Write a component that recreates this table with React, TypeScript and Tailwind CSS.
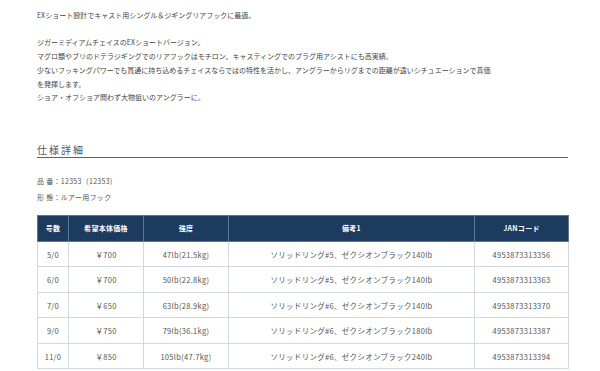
import React from "react";

const rows = [
  ["5/0", "￥700", "47lb(21.5kg)", "ソリッドリング#5、ゼクシオンブラック140lb", "4953873313356"],
  ["6/0", "￥700", "50lb(22.8kg)", "ソリッドリング#5、ゼクシオンブラック140lb", "4953873313363"],
  ["7/0", "￥650", "63lb(28.9kg)", "ソリッドリング#6、ゼクシオンブラック140lb", "4953873313370"],
  ["9/0", "￥750", "79lb(36.1kg)", "ソリッドリング#6、ゼクシオンブラック180lb", "4953873313387"],
  ["11/0", "￥850", "105lb(47.7kg)", "ソリッドリング#6、ゼクシオンブラック240lb", "4953873313394"],
];

export default function App() {
  return (
    <div
      className="w-[600px] h-[371px] overflow-hidden bg-white text-[#444] pl-[37px] pr-[32px]"
      style={{ fontFamily: '"Noto Sans CJK JP", "Noto Sans", sans-serif' }}
    >
      <div className="pt-[9px] text-[7px] leading-[13.7px] tracking-[0px]">
        <p>EXショート設計でキャスト用シングル＆ジギングリアフックに最適。</p>
        <p className="mt-[13.7px]">ジガーミディアムチェイスのEXショートバージョン。</p>
        <p>マグロ類やブリのドテラジギングでのリアフックはモチロン、キャスティングでのプラグ用アシストにも高実績。</p>
        <p>
          少ないフッキングパワーでも貫通に持ち込めるチェイスならではの特性を活かし、アングラーからリグまでの距離が遠いシチュエーションで真価
          <br />
          を発揮します。
        </p>
        <p>ショア・オフショア問わず大物狙いのアングラーに。</p>
      </div>

      <div className="mt-[38px] border-b border-[#4d6680]">
        <h2 className="text-[10px] leading-[14px] tracking-[2px] text-[#555]">仕様詳細</h2>
      </div>

      <div className="mt-[15px] text-[7px] leading-[16px] tracking-[0.3px] text-[#555]">
        <p>品 番：12353（12353)</p>
        <p>形 態：ルアー用フック</p>
      </div>

      <table className="mt-[10px] w-[531px] border-collapse table-fixed text-[7px]">
        <colgroup>
          <col className="w-[31px]" />
          <col className="w-[75px]" />
          <col className="w-[85px]" />
          <col className="w-[246px]" />
          <col className="w-[94px]" />
        </colgroup>
        <thead>
          <tr className="bg-[#1d3b5e] text-white font-bold h-[26px]">
            {["号数", "希望本体価格", "強度", "備考1", "JANコード"].map((h, i) => (
              <th
                key={i}
                className="border border-[#5d7896] font-bold text-center align-middle tracking-[0.3px]"
              >
                {h}
              </th>
            ))}
          </tr>
        </thead>
        <tbody>
          {rows.map((r, i) => (
            <tr key={i} className="h-[25.5px]">
              {r.map((c, j) => (
                <td
                  key={j}
                  className="border border-[#d3d9e0] text-center align-middle text-[7.5px] tracking-[0.3px] text-[#555]"
                >
                  {c}
                </td>
              ))}
            </tr>
          ))}
        </tbody>
      </table>
    </div>
  );
}
